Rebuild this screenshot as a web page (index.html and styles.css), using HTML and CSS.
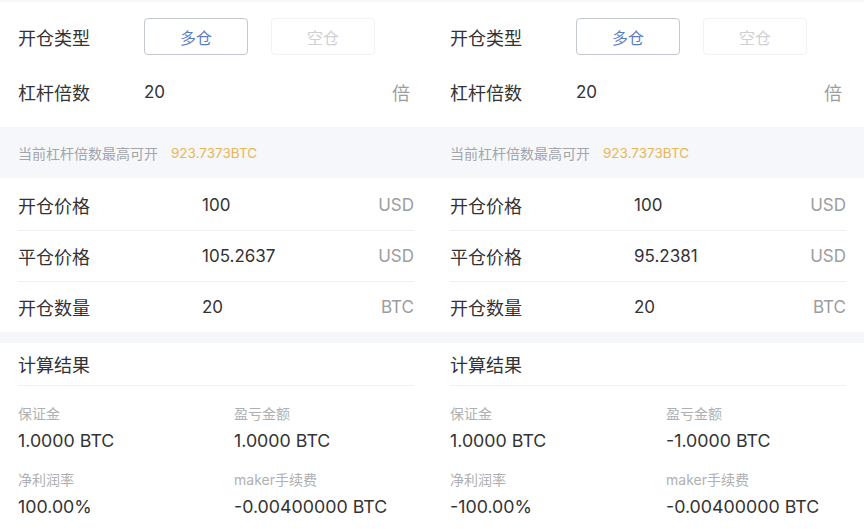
FILE: index.html
```html
<!DOCTYPE html>
<html lang="zh-CN">
<head>
<meta charset="utf-8">
<link rel="stylesheet" href="styles.css">
</head>
<body>
<div class="page">
  <div class="panel">
    <div class="sec-top">
      <div class="row-a">
        <span class="lbl-a">开仓类型</span>
        <div class="btns"><span class="btn on">多仓</span><span class="btn off">空仓</span></div>
      </div>
      <div class="row-a">
        <span class="lbl-a">杠杆倍数</span>
        <span class="val grow">20</span>
        <span class="unit u-bei">倍</span>
      </div>
    </div>
    <div class="band">当前杠杆倍数最高可开<span class="amt">923.7373BTC</span></div>
    <div class="sec-mid">
      <div class="row-b"><span class="lbl-b">开仓价格</span><span class="val grow">100</span><span class="unit">USD</span></div>
      <div class="row-b"><span class="lbl-b">平仓价格</span><span class="val grow">105.2637</span><span class="unit">USD</span></div>
      <div class="row-b"><span class="lbl-b">开仓数量</span><span class="val grow">20</span><span class="unit">BTC</span></div>
    </div>
    <div class="gap"></div>
    <div class="sec-res">
      <div class="res-h">计算结果</div>
      <div class="res-grid">
        <div class="cell"><div class="k">保证金</div><div class="v">1.0000 BTC</div></div>
        <div class="cell"><div class="k">盈亏金额</div><div class="v">1.0000 BTC</div></div>
        <div class="cell"><div class="k">净利润率</div><div class="v">100.00%</div></div>
        <div class="cell"><div class="k">maker手续费</div><div class="v">-0.00400000 BTC</div></div>
      </div>
    </div>
  </div>
  <div class="panel">
    <div class="sec-top">
      <div class="row-a">
        <span class="lbl-a">开仓类型</span>
        <div class="btns"><span class="btn on">多仓</span><span class="btn off">空仓</span></div>
      </div>
      <div class="row-a">
        <span class="lbl-a">杠杆倍数</span>
        <span class="val grow">20</span>
        <span class="unit u-bei">倍</span>
      </div>
    </div>
    <div class="band">当前杠杆倍数最高可开<span class="amt">923.7373BTC</span></div>
    <div class="sec-mid">
      <div class="row-b"><span class="lbl-b">开仓价格</span><span class="val grow">100</span><span class="unit">USD</span></div>
      <div class="row-b"><span class="lbl-b">平仓价格</span><span class="val grow">95.2381</span><span class="unit">USD</span></div>
      <div class="row-b"><span class="lbl-b">开仓数量</span><span class="val grow">20</span><span class="unit">BTC</span></div>
    </div>
    <div class="gap"></div>
    <div class="sec-res">
      <div class="res-h">计算结果</div>
      <div class="res-grid">
        <div class="cell"><div class="k">保证金</div><div class="v">1.0000 BTC</div></div>
        <div class="cell"><div class="k">盈亏金额</div><div class="v">-1.0000 BTC</div></div>
        <div class="cell"><div class="k">净利润率</div><div class="v">-100.00%</div></div>
        <div class="cell"><div class="k">maker手续费</div><div class="v">-0.00400000 BTC</div></div>
      </div>
    </div>
  </div>
</div>
</body>
</html>
```
FILE: styles.css
```css
* { box-sizing: border-box; margin: 0; padding: 0; }
html, body { background: #fff; }
body {
  margin: 0;
  font-family: "Inter", "Noto Sans CJK SC", sans-serif;
  color: #333;
  width: 864px;
  height: 529px;
  overflow: hidden;
}
.page { display: flex; border-top: 2px solid #f7f8fa; }
.panel { width: 432px; display: flex; flex-direction: column; }

.sec-top {
  padding: 16px 18px 17px;
  display: flex;
  flex-direction: column;
  gap: 18px;
}
.row-a { display: flex; align-items: center; height: 37px; }
.lbl-a { width: 126px; font-size: 18px; color: #333; }
.grow { flex: 1; }
.val { font-size: 17px; color: #333; }
.unit { font-size: 17px; color: #9d9d9d; }
.u-bei { padding-right: 4px; font-size: 18px; }

.btns { display: flex; gap: 23px; }
.btn {
  width: 104px;
  height: 37px;
  border-radius: 4px;
  display: flex;
  align-items: center;
  justify-content: center;
  font-size: 16px;
}
.btn.on { border: 1px solid #c4c8d0; color: #5b7fc6; }
.btn.off { border: 1px solid #f1f2f4; color: #cfd0d3; }

.band {
  height: 51px;
  background: #f6f7fa;
  padding-left: 18px;
  display: flex;
  align-items: center;
  font-size: 14px;
  color: #a3a5aa;
}
.amt { color: #e8b652; margin-left: 13px; font-size: 13.5px; }

.sec-mid { padding: 2px 18px 0; }
.row-b {
  height: 51px;
  display: flex;
  align-items: center;
  border-bottom: 1px solid #eeeff1;
}
.row-b:last-child { border-bottom: none; height: 50px; }
.lbl-b { width: 184px; font-size: 18px; }

.gap { height: 11px; background: #f6f7fa; }

.sec-res { padding: 0 18px; }
.res-h {
  height: 43px;
  display: flex;
  align-items: center;
  font-size: 18px;
  border-bottom: 1px solid #f1f2f4;
}
.res-grid {
  display: grid;
  grid-template-columns: 216px 1fr;
  padding-top: 18px;
  row-gap: 16px;
}
.k { font-size: 14px; line-height: 20px; color: #aeb0b4; }
.v { font-size: 17.8px; line-height: 26px; margin-top: 4px; color: #333; }
```
